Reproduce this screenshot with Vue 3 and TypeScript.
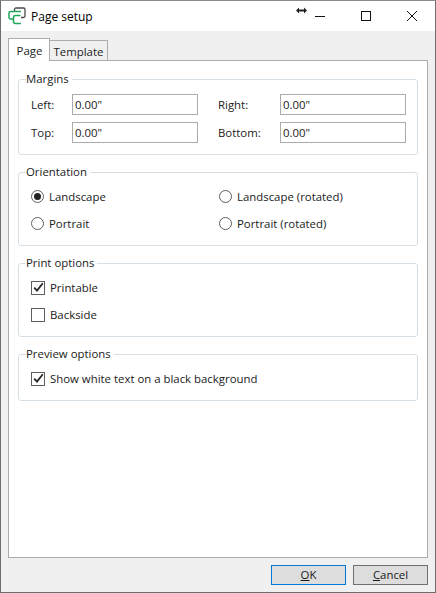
<script setup lang="ts">
const margins = [
  { a: 'Left:', b: 'Right:' },
  { a: 'Top:', b: 'Bottom:' },
]
const orient = [
  { label: 'Landscape', on: true },
  { label: 'Landscape (rotated)', on: false },
  { label: 'Portrait', on: false },
  { label: 'Portrait (rotated)', on: false },
]
</script>

<template>
  <div class="window">
    <header class="titlebar">
      <svg class="logo" width="18" height="18" viewBox="0 0 18 18" fill="none">
        <path d="M6.5 4V2.5Q6.5 1 8 1H15.5Q17 1 17 2.5V9Q17 10.5 15.5 10.5H13" stroke="#4a4a4a" stroke-width="1.3" />
        <path d="M13 4.5H2.5Q1 4.5 1 6V10.5Q1 12 2.5 12H5" stroke="#1fa85a" stroke-width="1.5" />
        <path d="M12.5 8.5H7.5Q5.5 8.5 5.5 10.5V14.5Q5.5 16.5 7.5 16.5H13" stroke="#1fa85a" stroke-width="1.5" />
      </svg>
      <span class="title">Page setup</span>
      <span class="resize">
        <svg width="11" height="7" viewBox="0 0 11 7"><path d="M0 3.5L3 .5V2.5H8V.5L11 3.5L8 6.5V4.5H3V6.5Z" fill="#222" /></svg>
      </span>
      <div class="controls">
        <svg width="46" height="31" viewBox="0 0 46 31"><path d="M18 15.5H28" stroke="#111" /></svg>
        <svg width="46" height="31" viewBox="0 0 46 31"><rect x="18.5" y="10.5" width="9" height="9" fill="none" stroke="#111" /></svg>
        <svg width="46" height="31" viewBox="0 0 46 31"><path d="M18 10L28 20M28 10L18 20" stroke="#111" /></svg>
      </div>
    </header>

    <main class="body">
      <div class="tabs">
        <div class="tab active">Page</div>
        <div class="tab">Template</div>
      </div>

      <section class="panel">
        <fieldset class="group margins">
          <legend>Margins</legend>
          <div class="margin-rows">
            <div v-for="row in margins" :key="row.a" class="margin-row">
              <label class="m-label">{{ row.a }}</label>
              <div class="input">0.00"</div>
              <label class="m-label second">{{ row.b }}</label>
              <div class="input">0.00"</div>
            </div>
          </div>
        </fieldset>

        <fieldset class="group orientation">
          <legend>Orientation</legend>
          <div class="radio-grid">
            <div v-for="o in orient" :key="o.label" class="radio-item">
              <span class="radio" :class="{ on: o.on }"></span>
              <span>{{ o.label }}</span>
            </div>
          </div>
        </fieldset>

        <fieldset class="group print">
          <legend>Print options</legend>
          <div class="checks">
            <div class="check-item">
              <span class="check"><svg width="11" height="11" viewBox="0 0 11 11"><path d="M1.2 5.6L4 8.6L9.8 1.2" fill="none" stroke="#222" stroke-width="1.7" /></svg></span>
              <span>Printable</span>
            </div>
            <div class="check-item">
              <span class="check"></span>
              <span>Backside</span>
            </div>
          </div>
        </fieldset>

        <fieldset class="group preview">
          <legend>Preview options</legend>
          <div class="checks">
            <div class="check-item">
              <span class="check"><svg width="11" height="11" viewBox="0 0 11 11"><path d="M1.2 5.6L4 8.6L9.8 1.2" fill="none" stroke="#222" stroke-width="1.7" /></svg></span>
              <span>Show white text on a black background</span>
            </div>
          </div>
        </fieldset>
      </section>

      <footer class="buttons">
        <button class="btn default"><u>O</u>K</button>
        <button class="btn"><u>C</u>ancel</button>
      </footer>
    </main>
  </div>
</template>

<style>
html, body { margin: 0; padding: 0; background: #fff; }
</style>

<style scoped>
.window {
  width: 436px;
  height: 593px;
  box-sizing: border-box;
  border: 1px solid #6e6e6e;
  border-top-color: #8a8a8a;
  display: flex;
  flex-direction: column;
  font-family: "Open Sans", "Noto Sans", sans-serif;
  font-size: 11.4px;
  color: #1a1a1a;
  background: #f0f0f0;
}
.titlebar {
  height: 30px;
  flex: none;
  background: #fff;
  display: flex;
  align-items: center;
  position: relative;
}
.logo { margin-left: 7px; margin-right: 5px; margin-top: -1px; }
.title { font-size: 12px; color: #000; }
.resize { position: absolute; left: 295px; top: 6px; line-height: 0; }
.controls { margin-left: auto; display: flex; margin-right: 0; }
.controls svg { display: block; }
.body {
  flex: 1;
  display: flex;
  flex-direction: column;
  padding: 7px;
  min-height: 0;
}
.tabs { display: flex; align-items: flex-end; height: 22px; flex: none; position: relative; z-index: 1; }
.tab {
  width: 58px;
  height: 20px;
  text-align: center;
  line-height: 21px;
  background: #f0f0f0;
  border: 1px solid #acacac;
  border-left: 0;
  border-bottom: 0;
  color: #222;
  box-sizing: border-box;
}
.tab.active {
  height: 23px;
  width: 42px;
  line-height: 23px;
  padding-left: 1px;
  background: #fff;
  border-left: 1px solid #acacac;
  margin-bottom: -1px;
}
.panel {
  flex: 1;
  background: #fff;
  border: 1px solid #acacac;
  padding: 10px 9px 0;
  display: flex;
  flex-direction: column;
  min-height: 0;
  width: 420px;
  box-sizing: border-box;
}
.group {
  margin: 0;
  padding: 0 8px;
  min-width: 0;
  border: 1px solid #d5dfe5;
  border-radius: 3px;
  box-sizing: border-box;
}
.group legend {
  padding: 0 3px 0 0;
  margin-left: -1px;
  line-height: 16px;
  color: #1a1a1a;
}
.margins { height: 84px; }
.orientation { height: 82px; margin-top: 9px; }
.print { height: 82px; margin-top: 9px; }
.preview { height: 55px; margin-top: 9px; }
.margin-rows { display: flex; flex-direction: column; gap: 7px; margin-top: 7px; }
.margin-row { display: flex; align-items: center; height: 21px; }
.m-label { width: 45px; padding-left: 4px; box-sizing: border-box; flex: none; }
.m-label.second { width: 82px; padding-left: 20px; }
.input {
  width: 126px;
  height: 21px;
  box-sizing: border-box;
  border: 1px solid #ababad;
  padding-left: 2px;
  line-height: 19px;
  background: #fff;
  flex: none;
}
.radio-grid { display: grid; grid-template-columns: 188px 1fr; grid-auto-rows: 27px; padding-left: 4px; margin-top: 3px; }
.radio-item { display: flex; align-items: center; gap: 5px; }
.radio {
  width: 11px;
  height: 11px;
  border: 1px solid #5f5f5f;
  border-radius: 50%;
  display: flex;
  align-items: center;
  justify-content: center;
  flex: none;
}
.radio.on::after {
  content: "";
  width: 7px;
  height: 7px;
  border-radius: 50%;
  background: #222;
}
.checks { margin-top: 3px; padding-left: 4px; }
.check-item { display: flex; align-items: center; gap: 5px; height: 27px; }
.check {
  width: 12px;
  height: 12px;
  border: 1px solid #5f5f5f;
  display: flex;
  align-items: center;
  justify-content: center;
  flex: none;
  background: #fff;
}
.check svg { display: block; }
.buttons { display: flex; justify-content: flex-end; gap: 7px; margin-top: 7px; flex: none; width: 420px; }
.btn {
  width: 75px;
  height: 20px;
  padding: 0;
  background: #dddddd;
  border: 1px solid #707070;
  font: inherit;
  color: #1a1a1a;
  line-height: 18px;
  text-align: center;
}
.btn.default { border-color: #0078d7; }
</style>
